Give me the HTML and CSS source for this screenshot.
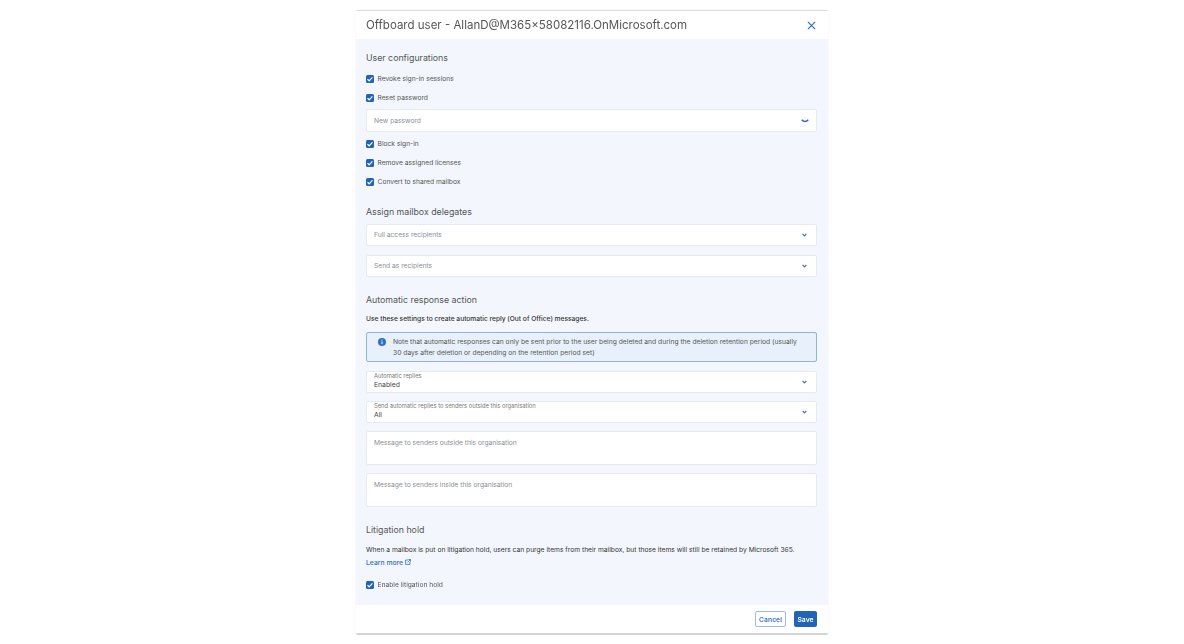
FILE: index.html

```html
<!DOCTYPE html>
<html lang="en">
<head>
<meta charset="UTF-8">
<title>Offboard user</title>
<link rel="stylesheet" href="styles.css">
</head>
<body>
<div class="panel">
  <div class="panel-head">
    <h1>Offboard user - AllanD@M365×58082116.OnMicrosoft.com</h1>
    <svg class="close" width="9" height="9" viewBox="0 0 10 10"><path d="M1 1l8 8M9 1l-8 8" fill="none" stroke="#2f6fc4" stroke-width="1.4"/></svg>
  </div>
  <div class="panel-body">
    <h2 class="first">User configurations</h2>
    <label class="check"><span class="box"><svg width="8" height="8" viewBox="0 0 8 8"><path d="M1.5 4.2l1.7 1.6 3.2-3.4" fill="none" stroke="#fff" stroke-width="1.2"/></svg></span>Revoke sign-in sessions</label>
    <label class="check"><span class="box"><svg width="8" height="8" viewBox="0 0 8 8"><path d="M1.5 4.2l1.7 1.6 3.2-3.4" fill="none" stroke="#fff" stroke-width="1.2"/></svg></span>Reset password</label>
    <div class="field pw">
      <span class="placeholder">New password</span>
      <svg class="chev wide" width="8" height="4" viewBox="0 0 8 4"><path d="M.7.8C2.5 3 5.5 3 7.3.8" fill="none" stroke="#2f6fc4" stroke-width="1.4"/></svg>
    </div>
    <label class="check"><span class="box"><svg width="8" height="8" viewBox="0 0 8 8"><path d="M1.5 4.2l1.7 1.6 3.2-3.4" fill="none" stroke="#fff" stroke-width="1.2"/></svg></span>Block sign-in</label>
    <label class="check"><span class="box"><svg width="8" height="8" viewBox="0 0 8 8"><path d="M1.5 4.2l1.7 1.6 3.2-3.4" fill="none" stroke="#fff" stroke-width="1.2"/></svg></span>Remove assigned licenses</label>
    <label class="check"><span class="box"><svg width="8" height="8" viewBox="0 0 8 8"><path d="M1.5 4.2l1.7 1.6 3.2-3.4" fill="none" stroke="#fff" stroke-width="1.2"/></svg></span>Convert to shared mailbox</label>

    <h2 class="assign">Assign mailbox delegates</h2>
    <div class="field"><span class="placeholder">Full access recipients</span><svg class="chev" width="5" height="4" viewBox="0 0 5 4"><path d="M.6.8l1.9 2 1.9-2" fill="none" stroke="#3d6fae" stroke-width="1.2"/></svg></div>
    <div class="field next"><span class="placeholder">Send as recipients</span><svg class="chev" width="5" height="4" viewBox="0 0 5 4"><path d="M.6.8l1.9 2 1.9-2" fill="none" stroke="#3d6fae" stroke-width="1.2"/></svg></div>

    <h2 class="auto">Automatic response action</h2>
    <p class="desc">Use these settings to create automatic reply (Out of Office) messages.</p>
    <div class="note">
      <svg class="info" width="8" height="8" viewBox="0 0 8 8"><circle cx="4" cy="4" r="4" fill="#2f6fc4"/><path d="M4 3.5v2.6M4 1.7v1" stroke="#fff" stroke-width="1"/></svg>
      <span>Note that automatic responses can only be sent prior to the user being deleted and during the deletion retention period (usually 30 days after deletion or depending on the retention period set)</span>
    </div>
    <div class="field filled">
      <div><div class="small-label">Automatic replies</div><div class="value">Enabled</div></div>
      <svg class="chev" width="5" height="4" viewBox="0 0 5 4"><path d="M.6.8l1.9 2 1.9-2" fill="none" stroke="#3d6fae" stroke-width="1.2"/></svg>
    </div>
    <div class="field filled next">
      <div><div class="small-label">Send automatic replies to senders outside this organisation</div><div class="value">All</div></div>
      <svg class="chev" width="5" height="4" viewBox="0 0 5 4"><path d="M.6.8l1.9 2 1.9-2" fill="none" stroke="#3d6fae" stroke-width="1.2"/></svg>
    </div>
    <div class="area next"><span class="placeholder">Message to senders outside this organisation</span></div>
    <div class="area next"><span class="placeholder">Message to senders inside this organisation</span></div>

    <h2 class="lit">Litigation hold</h2>
    <p class="desc tight">When a mailbox is put on litigation hold, users can purge items from their mailbox, but those items will still be retained by Microsoft 365.</p>
    <a class="more" href="#">Learn more
      <svg width="6" height="6" viewBox="0 0 6 6"><path d="M3 1H.6v4.4H5V3M3.4.5h2.1v2.1M5.4.6L2.6 3.4" fill="none" stroke="#2f6fc4" stroke-width=".8"/></svg>
    </a>
    <label class="check enable"><span class="box"><svg width="8" height="8" viewBox="0 0 8 8"><path d="M1.5 4.2l1.7 1.6 3.2-3.4" fill="none" stroke="#fff" stroke-width="1.2"/></svg></span>Enable litigation hold</label>
  </div>
  <div class="panel-foot">
    <button class="btn cancel">Cancel</button>
    <button class="btn save">Save</button>
  </div>
</div>
</body>
</html>
```

FILE: styles.css

```css
body { margin: 0; background: #fff; font-family: Inter, 'Noto Sans', sans-serif; color: #333; }
h1, h2, p { margin: 0; }
.panel { width: 472px; height: 625px; margin: 10px auto 0; display: flex; flex-direction: column;
         background: #fff; border-top: 1px solid #ddd; border-bottom: 2px solid #d4d4d4; border-radius: 2px; box-sizing: border-box;
         box-shadow: 0 0 2px rgba(0,0,0,.08); filter: blur(.5px); }
.panel-head { height: 28px; flex: none; display: flex; align-items: center; justify-content: space-between; padding: 0 12px 0 10px; }
.panel-head h1 { font-size: 11.5px; font-weight: 400; color: #555; }
.panel-body { flex: 1; background: #f3f7fd; padding: 0 11px 0 10px; }
.panel-foot { height: 28px; flex: none; display: flex; align-items: center; justify-content: flex-end; gap: 8px; padding: 0 11px; }

h2 { font-size: 8.8px; font-weight: 400; color: #555; line-height: 12px; }
h2.first { margin-top: 13px; margin-bottom: 5px; }
h2.assign { margin-top: 14.5px; margin-bottom: 6.5px; }
h2.auto { margin-top: 16.5px; margin-bottom: 7px; }
h2.lit { margin-top: 17.5px; margin-bottom: 7.5px; }

.check { display: flex; align-items: center; gap: 3.5px; height: 19px; font-size: 6.7px; color: #555; }
.box { width: 8px; height: 8px; background: #2263b8; border-radius: 1.5px; display: flex; }
.enable { margin-top: 6px; }

.field { height: 22px; margin: 2px 0 2.5px; background: #fff; border: 1px solid #e6ebf2; border-radius: 2px; box-sizing: border-box;
         display: flex; align-items: center; justify-content: space-between; padding: 0 9px 0 7px; }
.field.pw { height: 23px; margin-bottom: 2px; }
.field.next { margin-top: 9px; }
.placeholder { display: block; font-size: 6.68px; line-height: 10px; color: #8a8f96; }
.chev { flex: none; }
.chev.wide { margin-right: -2px; }

.desc { font-size: 6.65px; line-height: 12px; color: #333; font-weight: 500; }
.desc.tight { font-size: 6.69px; font-weight: 400; }

.note { height: 30px; margin: 7px 0 9px; box-sizing: border-box; background: #e8f1fb; border: 1px solid #8fb4dc; border-radius: 2px;
        display: flex; gap: 7px; padding: 3px 12px 0 11px; font-size: 6.73px; line-height: 11.5px; color: #555; }
.info { flex: none; margin-top: 2px; }

.small-label { font-size: 5.8px; line-height: 7px; color: #777; }
.value { font-size: 6.8px; line-height: 11.5px; color: #444; }
.filled.next { margin-top: 8px; }

.area { height: 34px; box-sizing: border-box; background: #fff; border: 1px solid #e6ebf2; border-radius: 2px; padding: 6px 7px; }
.area.next { margin-top: 8px; }

.more { display: block; font-size: 6.8px; line-height: 14px; color: #2f6fc4; font-weight: 500; text-decoration: none; }

.btn { height: 16px; padding: 0; border-radius: 2px; font-family: inherit; font-size: 6.8px; font-weight: 600; }
.cancel { width: 31px; background: #fff; color: #3d78c4; border: 1px solid #9dbce2; }
.save { width: 23px; background: #2263b8; color: #fff; border: none; }
```
